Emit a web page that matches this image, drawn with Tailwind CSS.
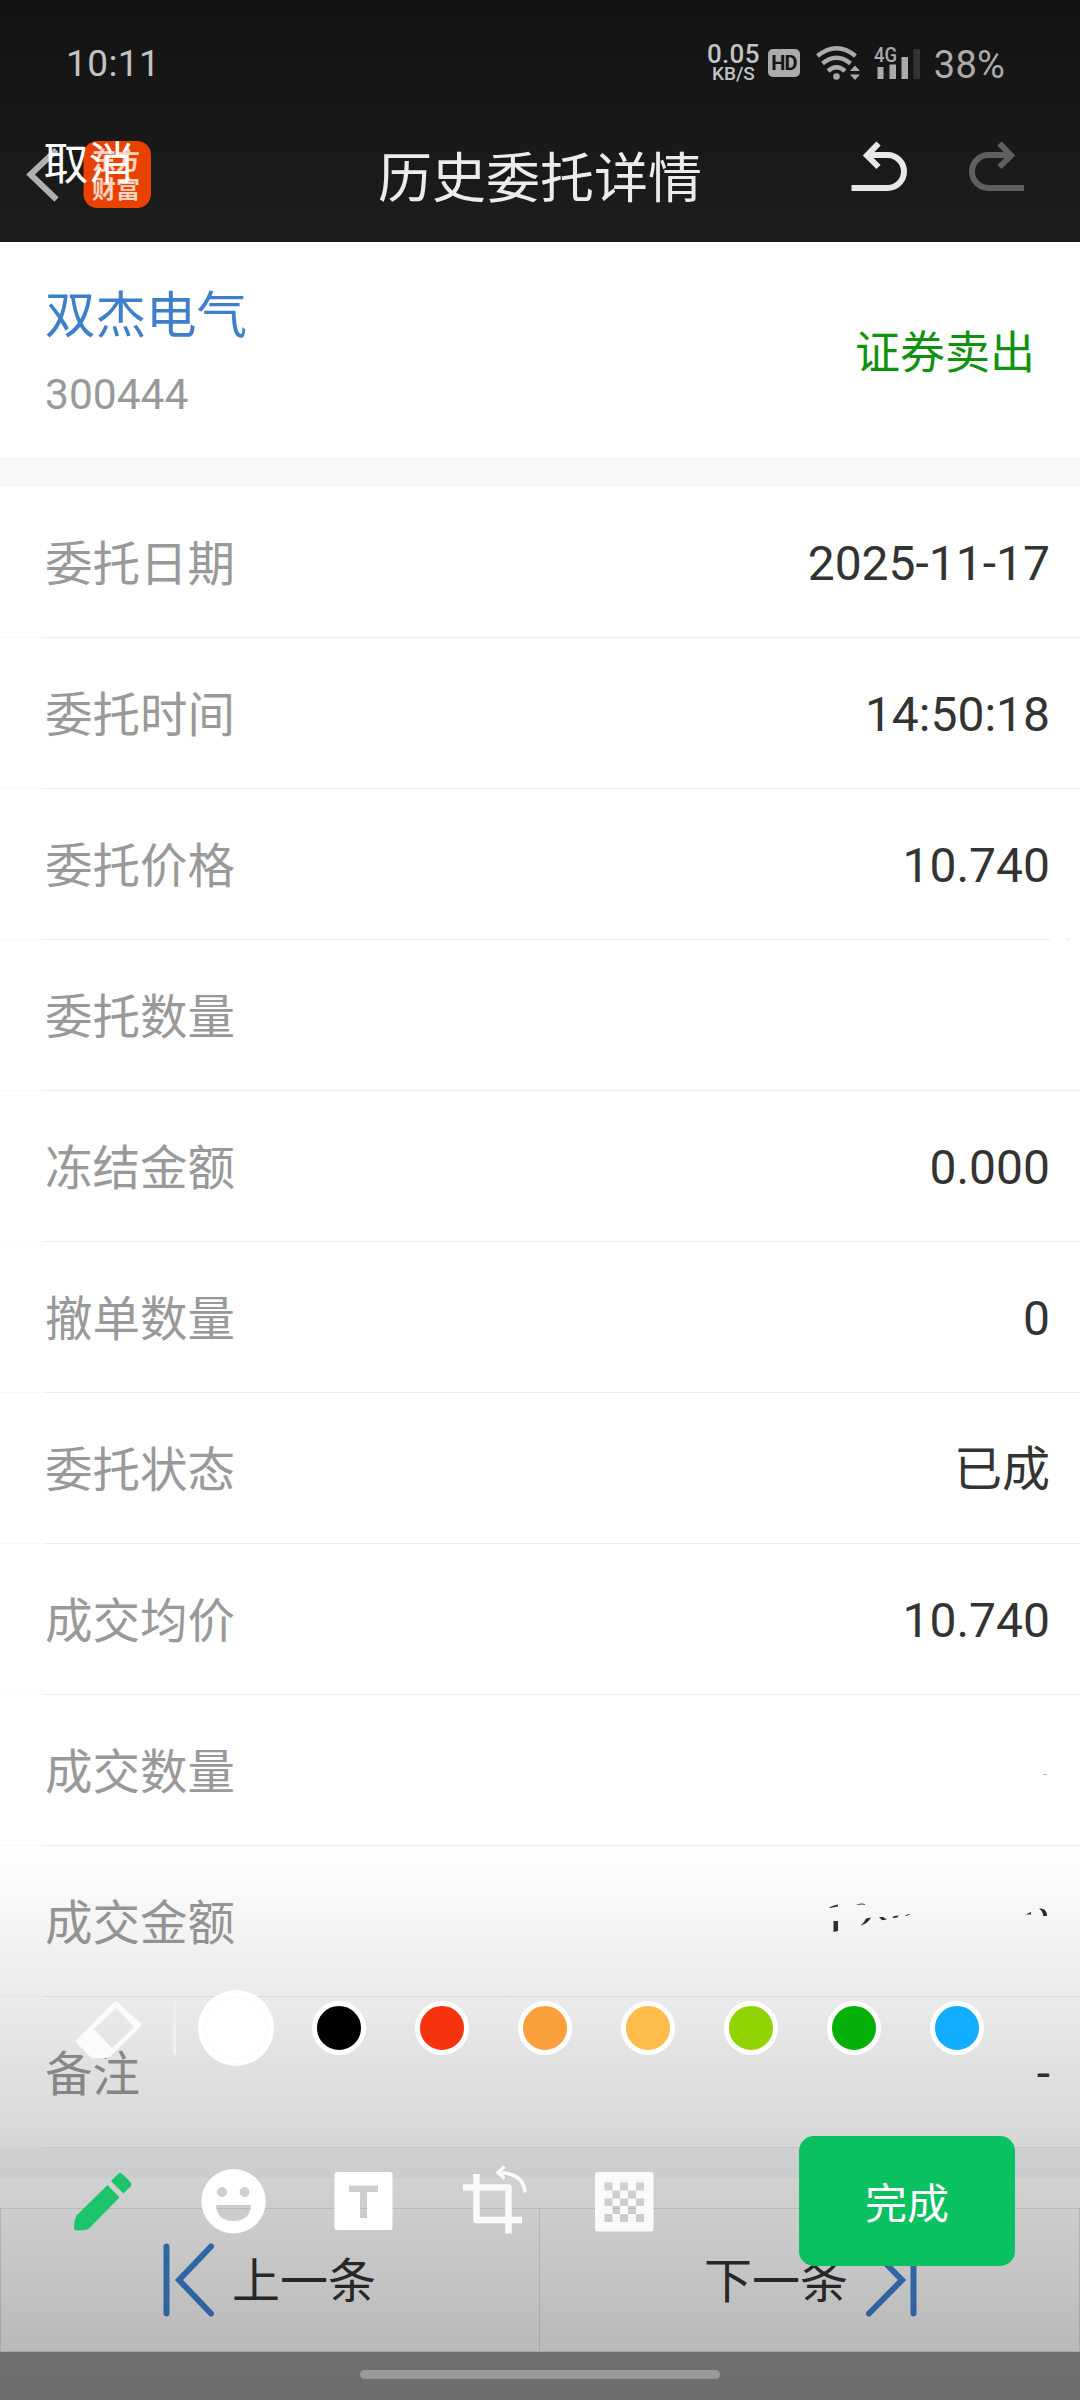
<!DOCTYPE html>
<html lang="zh-CN">
<head>
<meta charset="utf-8">
<title>历史委托详情</title>
<script src="https://cdn.jsdelivr.net/npm/@tailwindcss/browser@4"></script>
</head>
<body class="relative w-[1080px] h-[2400px] overflow-hidden bg-white font-[Roboto,'Noto_Sans_CJK_SC',sans-serif] text-[#333]">
<header class="relative flex flex-col h-[242px] bg-linear-to-b from-[#131313] to-[#1d1d1d]">
  <div class="flex items-center h-[126px] pl-[66px] pr-[75px] text-[#c3c3c3]">
    <span class="text-[37px] leading-none tracking-[0.4px]">10:11</span>
    <div class="ml-auto flex items-center">
      <div class="flex flex-col items-center w-[53px] mr-[8px] font-medium">
        <span class="text-[26px] leading-[21px] tracking-[0.3px]">0.05</span>
        <span class="text-[19px] leading-[18px]">KB/S</span>
      </div>
      <div class="flex items-center justify-center w-8 h-7 rounded-[5px] bg-[#ababab] text-[#151515] text-[20px] leading-none font-bold tracking-tighter">HD</div>
      <svg class="ml-4 w-[44px] h-[36px]" viewBox="815 43 44 36" fill="none" stroke="#ababab" stroke-width="4.4">
        <path d="M816.5 54Q835.5 38.5 854.500 54M821.500 61.500Q835.500 50 849.500 61.500M827 69Q835.500 61.500 844 69"/>
        <circle cx="835.500" cy="74.500" r="3.300" fill="#ababab" stroke="none"/>
        <path d="M849 69l5-5.500 5 5.500zM849 72.500l5 5.500 5-5.500z" fill="#ababab" stroke="none"/>
      </svg>
      <svg class="ml-[13px] w-[48px] h-[36px]" viewBox="872 43 48 36">
        <text x="873" y="60" font-size="20" font-weight="500" fill="#ababab" textLength="23" lengthAdjust="spacingAndGlyphs">4G</text>
        <path d="M876.500 65h6v12h-6zM888.500 62.500h6.500v14.500h-6.500zM900.500 55h6.500v22h-6.500z" fill="#ababab"/>
        <rect x="912.500" y="47" width="6.500" height="30" rx="1" fill="#333"/>
      </svg>
      <span class="ml-[13px] pt-[3px] text-[38px] leading-none tracking-[0.2px] text-[#ababab]">38%</span>
    </div>
  </div>
  <div class="flex-1 flex items-center justify-center pb-[8px] text-[54px] leading-none text-[#ececec]">历史委托详情</div>
  <svg class="absolute left-0 top-[130px]" width="160" height="90" viewBox="0 130 160 90">
    <path d="M56.500 150L30.500 174.500L56.500 199.500" fill="none" stroke="#b0b0b0" stroke-width="6"/>
    <rect x="83.500" y="141" width="67.500" height="67" rx="14" fill="#e84100"/>
    <g fill="#f8d3c4" font-family="'Noto Sans CJK SC',sans-serif" font-weight="700" font-size="24">
      <text x="92" y="169">东方</text><text x="92" y="198">财富</text>
    </g>
    <text x="43.500" y="180" font-size="45" fill="#fff" font-family="'Noto Sans CJK SC',sans-serif">取消</text>
  </svg>
  <svg class="absolute left-[840px] top-[136px]" width="200" height="60" viewBox="840 136 200 60" fill="none" stroke-width="6">
    <path stroke="#e8e8e8" d="M851.500 188h36a16.500 16.500 0 0 0 0-33h-20M878.500 143.500L867 155.500l11.500 11.500"/>
    <path stroke="#5f5f5f" d="M1024 188h-35.500a16.500 16.500 0 0 1 0-33h21M999.500 143.500L1011 155.500l-11.500 11.500"/>
  </svg>
</header>
<main>
  <section class="flex items-center justify-between h-[215px] px-[45px]">
    <div class="flex flex-col gap-[24px] pt-[7px]">
      <span class="text-[50.500px] leading-[60px] text-[#3d7fca]">双杰电气</span>
      <span class="text-[42.500px] leading-[50px] text-[#999]">300444</span>
    </div>
    <span class="text-[45px] leading-none text-[#109210] pt-[8px]">证券卖出</span>
  </section>
  <div class="h-[30px] bg-[#f7f8fa]"></div>
  <section id="rows"></section>
  <div class="h-[30px] bg-[#f7f8fa]"></div>
  <nav class="mt-[30px] h-[144px] grid grid-cols-2 border border-[#e3e3e3] text-[48px]">
    <div class="flex items-center pl-[162px] pb-[1px] gap-[17px] border-r border-[#e3e3e3]">
      <svg width="52" height="74" viewBox="0 0 52 74" fill="none" stroke="#3f83d4" stroke-width="6" stroke-linecap="round"><path d="M3.500 3.500v67M48 3.500L16 37l32 33.500"/></svg>
      <span class="leading-none pt-[5px]">上一条</span>
    </div>
    <div class="flex items-center justify-end pr-[162px] pb-[1px] gap-[17px]">
      <span class="leading-none pt-[5px]">下一条</span>
      <svg width="52" height="74" viewBox="0 0 52 74" fill="none" stroke="#3f83d4" stroke-width="6" stroke-linecap="round"><path d="M48.500 3.500v67M4 3.500L37 37L4 70.500"/></svg>
    </div>
  </nav>
  <div class="h-12 bg-[#999]"></div>
</main>
<div class="absolute inset-x-0 bottom-0 h-[550px] bg-linear-to-b from-black/0 to-black/30"></div>
<div class="absolute left-[360px] top-[2370px] w-[360px] h-[9px] rounded-full bg-[#999]"></div>

<!-- white brush marks over the amounts -->
<div class="absolute left-[1050px] top-[939px] w-[16px] h-px bg-white"></div>
<div class="absolute left-[1070px] top-[939px] w-[10px] h-px bg-white"></div>
<div class="absolute left-[1043px] top-[1774px] w-[4px] h-px bg-[#bbb]"></div>
<svg class="absolute left-[810px] top-[1890px]" width="270" height="60" viewBox="810 1890 270 60" fill="#2e2e2e">
  <path d="M829 1907.500l5-2 4-1v2l-8 1.500zM833.500 1921h4.500v10l-4.500 1zM856 1905q4-2.500 9-1v.8q-4-.8-9 .2zM860.500 1925.500q4-3 5.500-7l5-1q-3 6-10.500 8zM879 1917l4 0 4 2.500-5 .700zM892 1918l2-2 5-.500-2 2zM905 1915.500l4-1.500 1 .5-4 1.500zM1025.500 1914.500l5.500-2.500v2.500zM1039 1908.500q8-1 8 7.500h-4q0-5-4-7.500z"/>
</svg>

<!-- colour palette -->
<svg class="absolute left-0 top-[1980px]" width="1080" height="100" viewBox="0 1980 1080 100">
  <g fill="#fbfbfb">
    <path fill-rule="evenodd" d="M112.500 2003q3-3 6 0l21 19q3 3 0 6l-29 28q-2 2-5 2h-12q-2 0-4-2l-12-12q-2-3 0-5zM116 2008l-22 21 18 19 22-21z"/>
    <rect x="173" y="2001" width="3" height="54" fill="#efefef"/>
  </g>
  <circle cx="236" cy="2028" r="38" fill="#fff"/>
  <circle cx="236" cy="2028" r="31" fill="none" stroke="#f9f9f9" stroke-width="1"/>
  <g stroke="#fff" stroke-width="5">
    <circle cx="339" cy="2028" r="24.500" fill="#000"/>
    <circle cx="442" cy="2028" r="24.500" fill="#f7330f"/>
    <circle cx="545" cy="2028" r="24.500" fill="#fba03c"/>
    <circle cx="648" cy="2028" r="24.500" fill="#ffbc4a"/>
    <circle cx="751" cy="2028" r="24.500" fill="#91d300"/>
    <circle cx="854" cy="2028" r="24.500" fill="#05b109"/>
    <circle cx="957" cy="2028" r="24.500" fill="#12adff"/>
  </g>
</svg>

<!-- editing tools -->
<svg class="absolute left-0 top-[2150px]" width="700" height="100" viewBox="0 2150 700 100">
  <path fill="#1cc46c" d="M107.500 2185l12 12.500-31 31.500q-8 2-12 1.500-2.500 0-2.500-3 0-7 2.500-12zM111 2181l7-7q2-2 4 0 5 4 8.500 8.500 2 2 0 4l-7 7z"/>
  <path fill="#fff" fill-rule="evenodd" d="M233.500 2169a32 32 0 1 1 0 64.500a32 32 0 1 1 0-64.500zM222 2187a5 5 0 1 0 .1 0zM244.500 2187a5 5 0 1 0 .1 0zM216 2205q1 16 17.500 16t17.500-16z"/>
  <path fill="#fff" fill-rule="evenodd" d="M337 2172h53q2.500 0 2.500 2.500v53q0 2.500-2.500 2.500h-53q-2.500 0-2.500-2.500v-53q0-2.500 2.500-2.500zM349 2185.500v6.500h11v26h7v-26h11v-6.500z"/>
  <g fill="none" stroke="#fafafa" stroke-width="6.500">
    <path d="M463 2187.500h45.500v46M476.500 2174v46h45.500" stroke-linejoin="round"/>
    <path stroke-width="3.500" d="M525 2192.500q-1-19-26-20M504.500 2166.500l-6.500 6 6.500 6"/>
  </g>
  <path fill="#fafafa" fill-rule="evenodd" d="M597.500 2172h53.500q2.500 0 2.500 2.500v54.500q0 2.500-2.500 2.500h-53.500q-2.500 0-2.500-2.500v-54.500q0-2.500 2.500-2.500zM604.500 2182.500v8h8v-8zM620 2182.500v8h8v-8zM636 2182.500v8h8v-8zM612.500 2190.500v8h7.500v-8zM628 2190.500v8h8v-8zM604.500 2198.500v7.500h8v-7.500zM620 2198.500v7.500h8v-7.500zM636 2198.500v7.500h8v-7.500zM612.500 2206v8h7.500v-8zM628 2206v8h8v-8zM604.500 2214v8h8v-8zM620 2214v8h8v-8zM636 2214v8h8v-8z"/>
</svg>
<button class="absolute left-[799px] top-[2136px] w-[216px] h-[130px] rounded-[15px] bg-[#09c160] text-white text-[42px] leading-none pt-[7px]">完成</button>
<script>
const rows = [["委托日期","2025-11-17"],["委托时间","14:50:18"],["委托价格","10.740"],["委托数量",""],["冻结金额","0.000"],["撤单数量","0"],["委托状态","已成"],["成交均价","10.740"],["成交数量",""],["成交金额",""],["备注","-"]];
document.getElementById("rows").innerHTML = rows.map(([k, v]) => `
  <div class="h-[151px] flex flex-col">
    <div class="flex-1 flex items-center justify-between pl-[45px] pr-[30px] text-[48px] leading-none pt-[4px]">
      <span class="text-[#999] text-[47.500px] pt-[3px]">${k}</span><span>${v}</span>
    </div>
    <div class="h-px bg-[#f8f8f8] pl-[45px]"><div class="h-px bg-[#ececec]"></div></div>
  </div>`).join("");
</script>
</body>
</html>
